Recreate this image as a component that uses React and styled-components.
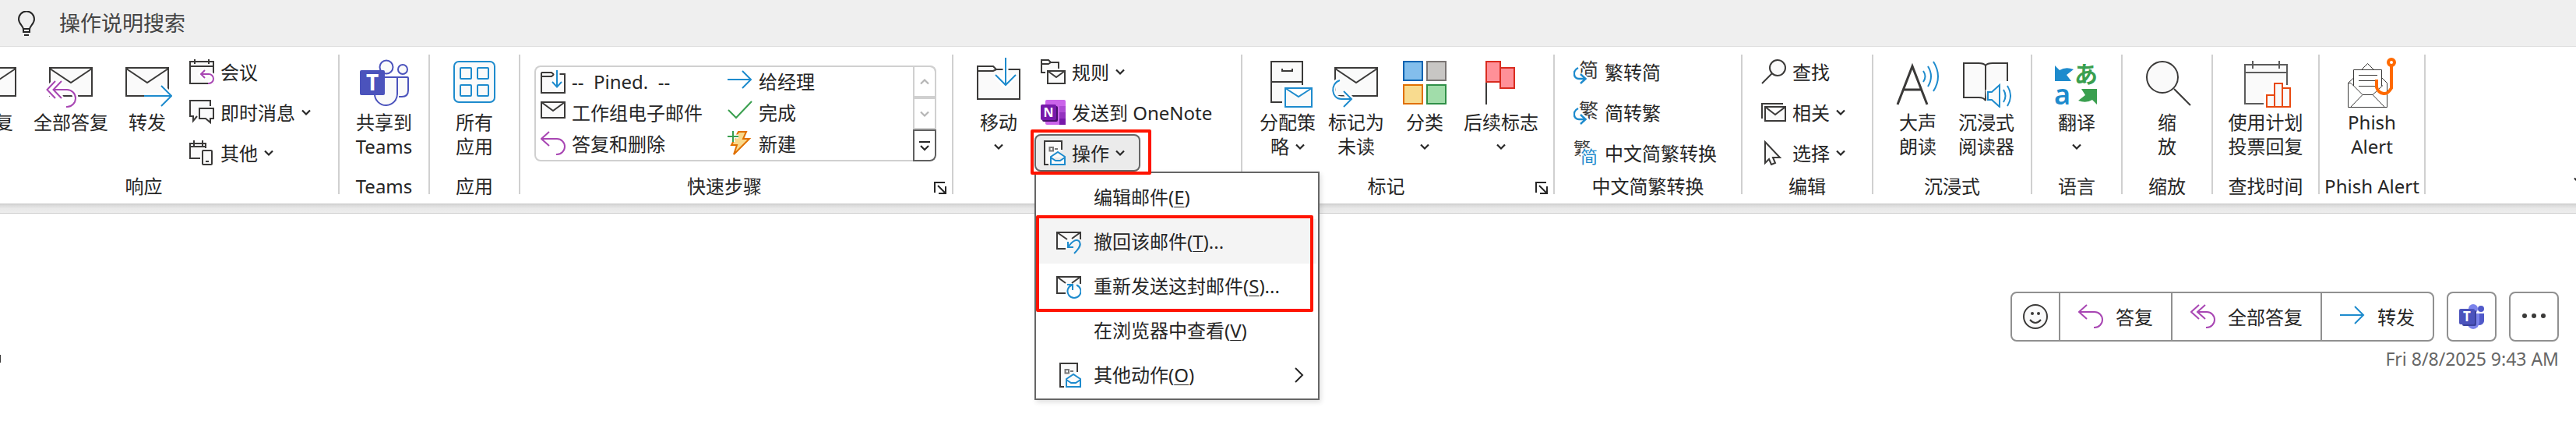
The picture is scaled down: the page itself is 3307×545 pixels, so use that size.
import React from "react";
import styled, { createGlobalStyle, css } from "styled-components";

const INK = "#3b3a39";
const BLUE = "#1e8bcd";
const PURPLE = "#a846b3";
const PAPER = "#fafafa";

const GlobalStyle = createGlobalStyle`
  * { box-sizing: border-box; }
  body {
    margin: 0;
    background: #fff;
    color: #262626;
    font-family: "Noto Sans", "Noto Sans CJK SC", sans-serif;
    font-size: 24px;
    line-height: 31px;
    overflow-x: hidden;
  }
  button, input { font: inherit; color: inherit; }
`;

/* ---------- layout ---------- */

const SearchBar = styled.label`
  display: flex;
  align-items: center;
  gap: 26px;
  height: 60px;
  padding: 0 18px;
  background: #efefef;
  border-bottom: 1px solid #dedede;
`;

const SearchInput = styled.input`
  width: 320px;
  padding: 0;
  border: 0;
  outline: 0;
  background: transparent;
  font-size: 27px;
  line-height: 40px;
  &::placeholder { color: #444; opacity: 1; }
`;

const Ribbon = styled.header`
  display: flex;
  align-items: stretch;
  justify-content: space-between;
  overflow-x: clip;
  background: #fff;
  border-bottom: 1px solid #c8c8c8;
`;

const Track = styled.div`
  display: flex;
  margin-left: -65px;
`;

const Group = styled.section`
  display: flex;
  flex: none;
  flex-direction: column;
  min-width: ${(p) => p.$min}px;
  padding: 8px 0 6px;
`;

const Divider = styled.div`
  flex: none;
  width: 2px;
  margin: 10px 0 12px;
  background: #d0d0d0;
`;

const Tools = styled.div`
  display: flex;
  align-items: flex-start;
  justify-content: ${(p) => (p.$center ? "center" : "flex-start")};
  height: 152px;
  padding-left: ${(p) => (p.$center ? 0 : 14)}px;
`;

const Footer = styled.footer`
  display: flex;
  align-items: center;
  height: 32px;
  margin-top: 3px;
`;

const GroupName = styled.h2`
  flex: 1;
  margin: 0;
  font-size: 24px;
  font-weight: 400;
  line-height: 32px;
  text-align: center;
  white-space: nowrap;
`;

const plainButton = css`
  border: 0;
  background: transparent;
  white-space: nowrap;
  cursor: pointer;
`;

const Launcher = styled.button`
  ${plainButton}
  display: flex;
  width: 30px;
  padding: 6px 6px 2px 6px;
`;

const LargeButton = styled.button`
  ${plainButton}
  display: flex;
  flex-direction: column;
  align-items: center;
  min-width: 88px;
  padding: 6px 6px 0;
  line-height: 31px;
`;

const LargeLabel = styled.span`
  display: flex;
  flex-direction: column;
  align-items: center;
  margin-top: 3px;
`;

const Line = styled.span`
  display: flex;
  align-items: center;
  gap: 8px;
  height: 31px;
`;

const Column = styled.div`
  display: flex;
  flex-direction: column;
  align-items: flex-start;
  gap: 4px;
  margin-left: 2px;
`;

const RowButton = styled.button`
  ${plainButton}
  display: flex;
  align-items: center;
  gap: 8px;
  height: 48px;
  padding: 0 20px 0 8px;
  ${(p) =>
    p.$open &&
    css`
      background: #ebebeb;
      border-radius: 8px;
      box-shadow: inset 0 0 0 2px #666;
    `}
`;

const Gallery = styled.div`
  display: flex;
  width: 516px;
  height: 123px;
  margin: 16px 4px 0;
  overflow: hidden;
  border-radius: 8px;
  box-shadow: inset 0 0 0 2px #d0d0d0;
`;

const GalleryItems = styled.div`
  display: grid;
  flex: 1;
  grid-template-columns: 240px 1fr;
  grid-auto-rows: 40px;
  padding-left: 8px;
`;

const GalleryItem = styled.button`
  ${plainButton}
  display: flex;
  align-items: center;
  gap: 8px;
  padding: 0;
  span { white-space: pre; }
`;

const Pager = styled.div`
  display: flex;
  flex-direction: column;
  width: 30px;
`;

const PagerButton = styled.button`
  ${plainButton}
  display: flex;
  flex: 1;
  align-items: center;
  justify-content: center;
  padding: 0;
  border: 2px solid ${(p) => (p.$active ? "#5f5f5f" : "#d0d0d0")};
  border-radius: ${(p) => (p.$active ? "0 0 8px 0" : p.$first ? "0 8px 0 0" : "0")};
`;

const CollapseButton = styled.button`
  ${plainButton}
  align-self: flex-end;
  display: flex;
  flex: none;
  margin: 0 -9px 24px 0;
  padding: 0;
`;

/* ---------- drop-down ---------- */

const MenuAnchor = styled.div`
  position: relative;
  z-index: 2;
`;

const Menu = styled.ul`
  position: absolute;
  top: 100%;
  left: 0;
  width: 366px;
  margin: 0;
  padding: 2px;
  list-style: none;
  background: #fff;
  border: 2px solid #666;
  box-shadow: 2px 3px 6px rgba(0, 0, 0, 0.12);
`;

const MenuItem = styled.button`
  ${plainButton}
  display: flex;
  align-items: center;
  gap: 16px;
  width: 100%;
  height: 57px;
  padding: 0 16px 0 24px;
  background: ${(p) => (p.$hover ? "#f4f4f4" : "transparent")};
  text-align: left;
  u { text-decoration-thickness: 1px; text-underline-offset: 3px; }
`;

const MenuIcon = styled.span`
  display: flex;
  width: 32px;
`;

const MenuText = styled.span`
  flex: 1;
`;

const Highlight = styled.div`
  position: absolute;
  border: 4px solid #ff1400;
  border-radius: 2px;
  pointer-events: none;
`;

const ButtonHighlight = styled(Highlight)`
  inset: -6px -14px -4px -5px;
`;

const ItemsHighlight = styled(Highlight)`
  top: 54px;
  left: 0;
  right: 6px;
  height: 124px;
`;

/* ---------- message pane ---------- */

const Shade = styled.div`
  height: 12px;
  background: linear-gradient(#d6d6d6, #e9e9e9 50%, #ededed);
  border-bottom: 1px solid #cfcfcf;
`;

const Message = styled.main`
  display: flex;
  flex-direction: column;
  align-items: flex-end;
  gap: 6px;
  padding: 100px 22px 60px 0;
`;

const Actions = styled.div`
  display: flex;
  gap: 16px;
`;

const Segments = styled.div`
  display: flex;
  height: 64px;
  border: 2px solid #909090;
  border-radius: 8px;
`;

const Segment = styled.button`
  ${plainButton}
  display: flex;
  align-items: center;
  gap: 16px;
  padding: 0 ${(p) => (p.$icon ? 14 : 23)}px;
  & + & { border-left: 2px solid #909090; }
`;

const Details = styled.div`
  display: flex;
  align-items: center;
  justify-content: space-between;
  width: 100%;
`;

const Edge = styled.span`
  width: 1px;
  height: 10px;
  background: ${INK};
`;

const Stamp = styled.time`
  color: #666;
  font-size: 23px;
  line-height: 32px;
`;

/* ---------- icons ---------- */

const Drawing = styled.svg`
  display: block;
  flex: none;
`;

const Svg = ({ s = 32, w = s, h = s, color = INK, children }) => (
  <Drawing width={w} height={h} viewBox={`0 0 ${w} ${h}`} fill="none" stroke={color} strokeWidth="2" aria-hidden="true">
    {children}
  </Drawing>
);

const Chevron = ({ color = "#262626" }) => (
  <Svg w={12} h={12} color={color}><path d="M1 3.5 6 8.5 11 3.5" strokeWidth="2.2" /></Svg>
);
const ChevronUp = () => <Svg w={12} h={12} color="#b5b5b5"><path d="M1 8.5 6 3.5 11 8.5" strokeWidth="2.2" /></Svg>;
const MoreIcon = () => <Svg w={14} h={14} color="#262626"><path d="M0 2H14M2 7 7 12 12 7" /></Svg>;
const LaunchIcon = () => <Svg s={18} color="#262626"><path d="M2 15V2H15M6 6 15 15M16 7V16H7" /></Svg>;

const Bulb = () => (
  <Svg color="#262626">
    <path d="M12 24C12 19 6 17 6 10.500A10 10 0 0 1 26 10.500C26 17 20 19 20 24V27H12ZM12 23H20M13 31H19" />
  </Svg>
);

const BigEnvelope = () => (
  <g><rect x="5" y="13" width="54" height="36" fill={PAPER} /><path d="M5 14 32 32 59 14" /></g>
);
const Halo = ({ d, color, width = 2 }) => (
  <g><path d={d} stroke="#fff" strokeWidth="7" /><path d={d} stroke={color} strokeWidth={width} /></g>
);

const ReplyBig = () => <Svg s={64}><BigEnvelope /></Svg>;
const ReplyAllBig = () => (
  <Svg s={64}><BigEnvelope /><Halo color={PURPLE} d="M12 30 1.500 41 12 52M20 30 9.500 41 20 52M10 41H27A11 11 0 0 1 27 63H26" /></Svg>
);
const ForwardBig = () => <Svg s={64}><BigEnvelope /><Halo color={BLUE} d="M28 49H62M50 36 63 49 50 62" /></Svg>;

const MeetingIcon = () => (
  <Svg>
    <rect x="1" y="3" width="30" height="28" fill={PAPER} /><path d="M1 9H31M7 0V6M25 0V6" />
    <Halo color={PURPLE} d="M20 14 15 19 20 24M16 19H25A6 6 0 0 1 25 31H24" />
  </Svg>
);
const ChatIcon = () => (
  <Svg>
    <path d="M27 8V1H1V21H5V27L10 21" fill={PAPER} /><path d="M13 11H31V24H27V29L21 24H13Z" fill={PAPER} />
  </Svg>
);
const DevicesIcon = () => (
  <Svg>
    <path d="M21 10V4H1V23H14" fill={PAPER} /><path d="M1 8H21M6 0V7M17 0V7" />
    <rect x="17" y="13" width="12" height="18" rx="1" fill={PAPER} /><path d="M21 27H25" />
  </Svg>
);

const TeamsBig = () => (
  <Svg s={64} color="#4b53bc">
    <circle cx="35" cy="12" r="8.500" fill={PAPER} /><circle cx="56" cy="15" r="6" fill={PAPER} />
    <path d="M50 25H62Q63 25 63 26V42Q63 50 55 50H51" fill={PAPER} />
    <path d="M33 25H49V46A14 14 0 0 1 20 47" fill={PAPER} />
    <rect x="1" y="16" width="32" height="32" rx="2" fill="#4b53bc" stroke="none" />
    <text x="17" y="42" textAnchor="middle" fontSize="28" fontWeight="700" fill="#fff" stroke="none">T</text>
  </Svg>
);
const AppsBig = () => (
  <Svg s={64} color={BLUE}>
    <rect x="6" y="5" width="52" height="52" rx="6" fill={PAPER} />
    {[14, 36].map((x) => [13, 35].map((y) => <rect key={`${x}-${y}`} x={x} y={y} width="14" height="14" rx="1" />))}
  </Svg>
);

const PinFolder = () => (
  <Svg><path d="M1 5H14L17 7.500 14 10H1M24 7H31V31H1V5" fill={PAPER} /><Halo color={BLUE} d="M21 2V23M15 17 21 23.500 27 17" /></Svg>
);
const MailIcon = () => <Svg><rect x="1" y="3" width="30" height="20" fill={PAPER} /><path d="M1 3 16 14 31 3" /></Svg>;
const ReplyIcon = () => <Svg color={PURPLE}><path d="M11 1 1 10 11 19M2 10H21A10 10 0 0 1 21 30H20" /></Svg>;
const ReplyAllIcon = () => <Svg color={PURPLE}><path d="M11 1 1 10 11 19M19 1 9 10 19 19M10 10H21A10 10 0 0 1 21 30H20" /></Svg>;
const ArrowIcon = () => <Svg color={BLUE}><path d="M0 14H29M19 3 30 14 19 25" /></Svg>;
const CheckIcon = () => <Svg color="#3a9f4f"><path d="M1 13 11 23 31 2" /></Svg>;
const BoltIcon = () => (
  <Svg>
    <path d="M14 1H24L20 10H28L8 30 12 18H5Z" fill="#f9d98c" stroke="#e07000" />
    <path d="M7 0V14M0 7H14" stroke="#fff" strokeWidth="5" /><path d="M7 0V14M0 7H14" stroke="#3a9f4f" />
  </Svg>
);

const MoveBig = () => (
  <Svg s={64}>
    <path d="M5 11H25L29 15H59V53H5Z" fill={PAPER} /><path d="M5 17H25L29 15" />
    <Halo color={BLUE} d="M41 0V34M28 22 41 35 54 22" />
  </Svg>
);
const RulesIcon = () => (
  <Svg>
    <path d="M6 17H1V1H10L13 4H23V12M1 6H10L13 4" fill={PAPER} />
    <rect x="9" y="15" width="22" height="16" fill={PAPER} /><path d="M9 15 20 23 31 15" />
  </Svg>
);
const OneNoteIcon = () => (
  <Svg>
    <g stroke="none">
      <rect x="6" y="0" width="26" height="32" rx="2" fill="#ca64ea" />
      <path d="M24 8H32V16H24Z" fill="#ae4bd5" /><path d="M24 16H32V24H24Z" fill="#9332bf" /><path d="M24 24H32V32H24Z" fill="#7719aa" />
      <rect x="2" y="8" width="20" height="20" rx="2" fill="#45106a" /><rect x="0" y="6" width="20" height="20" rx="2" fill="#7719aa" />
      <text x="10" y="22" textAnchor="middle" fontSize="16" fontWeight="700" fill="#fff">N</text>
    </g>
  </Svg>
);
const ActionsIcon = () => (
  <Svg>
    <path d="M10 31H5V1H27V12" fill={PAPER} /><path d="M11.500 9H16V13.500H11.500ZM18 11H22" stroke="#777" />
    <path d="M13 21 22 15 31 21V31H13ZM13 22 19 26H25L31 22" stroke={BLUE} fill={PAPER} />
  </Svg>
);
const RecallIcon = () => (
  <Svg>
    <path d="M12 25H1V4H31V13" fill={PAPER} /><path d="M1 4 14 13M31 4 20 12" />
    <path d="M15 16V23H22M15 23C20 16 25 12 29 15C33 19 30 24 23 31" stroke={BLUE} />
  </Svg>
);
const ResendIcon = () => (
  <Svg>
    <path d="M12 25H1V4H31V13" fill={PAPER} /><path d="M1 4 12 12M31 4 20 12" />
    <path d="M14 14H21V21M20 14.500A8.500 8.500 0 1 0 26 14.500" stroke={BLUE} />
  </Svg>
);
const NextIcon = () => <Svg w={12} h={20} color="#262626"><path d="M1 1 10 10 1 19" /></Svg>;

const CabinetBig = () => (
  <Svg s={64}>
    <rect x="11" y="5" width="40" height="52" fill={PAPER} /><path d="M11 31H51M25 14V17H38V14" />
    <path d="M27 37H64V64H27Z" fill="#fff" stroke="#fff" strokeWidth="4" />
    <path d="M29 39H63V63H29ZM29 39 46 50 63 39" fill={PAPER} stroke={BLUE} />
  </Svg>
);
const UnreadBig = () => (
  <Svg s={64}><BigEnvelope /><Halo color={BLUE} d="M11 29C-2 33 0 53 13 53H26M16 43 26 53 16 63" /></Svg>
);
const CategoryBig = () => (
  <Svg s={64}>
    <path d="M5 5H29V29H5Z" fill="#83beec" stroke="#0063b1" /><path d="M35 5H59V29H35Z" fill="#c8c6c4" stroke="#7a7574" />
    <path d="M5 35H29V59H5Z" fill="#f8db8f" stroke="#e07000" /><path d="M35 35H59V59H35Z" fill="#a1ddaa" stroke="#309048" />
  </Svg>
);
const FlagBig = () => (
  <Svg s={64}>
    <path d="M13 32V60" /><path d="M31 13H49V39H31Z" fill="#ff9098" stroke="#d92c20" /><path d="M13 5H31V31H13Z" fill="#ff9098" stroke="#d92c20" />
  </Svg>
);

const ConvertIcon = ({ glyph }) => (
  <Svg>
    <text x="7" y="23" fontSize="25" fill={INK} stroke="none">{glyph}</text>
    <Halo color={BLUE} width={2.5} d="M6 11C-2 15 0 25 7 25H15M9 19 15.500 25 9 31" />
  </Svg>
);
const ConvertBothIcon = () => (
  <Svg>
    <text x="0" y="18" fontSize="22" fill={INK} stroke="none">繁</text>
    <rect x="9" y="10" width="23" height="22" fill="#fff" stroke="none" />
    <text x="9" y="29" fontSize="22" fill={BLUE} stroke="none">简</text>
  </Svg>
);
const FindIcon = () => <Svg><circle cx="21" cy="11" r="10" fill={PAPER} /><path d="M14 18 1 31" /></Svg>;
const RelatedIcon = () => <Svg><path d="M1 24V5H28" /><path d="M5 9H31V27H5ZM5 9 18 19 31 9" fill={PAPER} /></Svg>;
const CursorIcon = () => <Svg><path d="M5 2V29L10 24 13 31 18 29 15 22H24Z" fill={PAPER} /></Svg>;

const ReadAloudBig = () => (
  <Svg s={64}>
    <path d="M6 60 25 11 44 60M13 41H37" strokeWidth="3" />
    <path d="M39 17Q44 24 39 31M45 11Q53 24 45 37M52 5Q64 24 52 43" stroke={BLUE} />
  </Svg>
);
const ReaderBig = () => (
  <Svg s={64}>
    <path d="M31 10Q29 7 22 7H3V51H22Q29 51 31 55V10Q33 7 40 7H59V51H32" fill={PAPER} />
    <path d="M31 41H36L49 30H64V64H33Z" fill="#fff" stroke="none" />
    <path d="M34 44H39L49 35V63L39 54H34Z" stroke={BLUE} fill={PAPER} /><path d="M54 41Q59 49 54 57M59 36Q67 49 59 62" stroke={BLUE} />
  </Svg>
);
const TranslateBig = () => (
  <Svg s={64}>
    <g stroke="none">
      <path d="M4 10 10 16Q18 11 28 15L19 22 25 30H4Z" fill={BLUE} />
      <path d="M38 40H58V60L52 54Q44 59 34 55L43 48Z" fill="#3a9f4f" />
      <text x="29" y="32" fontSize="30" fontWeight="700" fill="#3a9f4f">あ</text>
      <text x="3" y="60" fontSize="36" fontWeight="600" fill={BLUE}>a</text>
    </g>
  </Svg>
);
const ZoomBig = () => <Svg s={64}><circle cx="26" cy="25" r="20" fill={PAPER} /><path d="M41 40 62 61" /></Svg>;
const PollBig = () => (
  <Svg s={64} color="#5c5c5c">
    <path d="M5 9H59V59H5Z" fill={PAPER} /><path d="M5 19H59M15 4V14M49 4V14" />
    <path d="M29 44H39V29H57V35H64V64H29Z" fill="#fff" stroke="none" />
    <path d="M33 63V48H43V63ZM43 63V33H53V63ZM53 39H63V63H53" stroke="#e8490f" fill={PAPER} />
  </Svg>
);
const PhishBig = () => (
  <Svg s={64}>
    <g strokeWidth="1">
      <path d="M19 15 26.500 7.500 34 15M8.500 26 1.500 32.500V63.500H51.500V32.500L45 26M1.500 32.500H5L20 47.500H33L46 35.500M20 47.500 5 63M33 47.500 48 63" />
      <path d="M8.500 36V15.500H44.500V36" /><path d="M15 22.500H39M15 29.500H37M15 36.500H37" />
    </g>
    <circle cx="57" cy="6" r="4" stroke="#ff6a00" strokeWidth="4" />
    <path d="M57 10V39Q52 47 47 46Q40 45 38 38V28" stroke="#ff6a00" strokeWidth="4" />
  </Svg>
);

const SmileIcon = () => (
  <Svg>
    <circle cx="16" cy="16" r="15" fill={PAPER} /><path d="M9 20Q16 28 23 20" />
    <circle cx="12" cy="12" r="2" fill={INK} stroke="none" /><circle cx="20" cy="12" r="2" fill={INK} stroke="none" />
  </Svg>
);
const TeamsIcon = () => (
  <Svg>
    <g stroke="none">
      <circle cx="28" cy="6" r="4" fill="#5059c9" /><path d="M22 12H32V22Q31 27 25 27H22Z" fill="#5059c9" />
      <circle cx="18" cy="6" r="6" fill="#7b83eb" /><path d="M10 12H26V23A8 9 0 0 1 10 23Z" fill="#7b83eb" />
      <rect x="4" y="8" width="18" height="20" rx="2" fill="#3a429c" /><rect x="0" y="6" width="20" height="20" rx="2" fill="#4b53bc" />
      <text x="10" y="22" textAnchor="middle" fontSize="17" fontWeight="700" fill="#fff">T</text>
    </g>
  </Svg>
);
const DotsIcon = () => (
  <Svg color="none"><g fill={INK}><circle cx="4" cy="15" r="3" /><circle cx="16" cy="15" r="3" /><circle cx="28" cy="15" r="3" /></g></Svg>
);

/* ---------- composed parts ---------- */

const CHEVRON = "chevron";

const Large = ({ icon, lines }) => (
  <LargeButton type="button">
    {icon}
    <LargeLabel>
      {lines.map((line) => (
        <Line key={line}>
          {line.replace(CHEVRON, "")}
          {line.endsWith(CHEVRON) && <Chevron />}
        </Line>
      ))}
    </LargeLabel>
  </LargeButton>
);

const Row = ({ icon, label, drop, open }) => (
  <RowButton type="button" $open={open} aria-expanded={open}>
    {icon}
    <span>{label}</span>
    {drop && <Chevron />}
  </RowButton>
);

const RibbonGroup = ({ name, min, center, launcher, children }) => (
  <>
    <Group $min={min}>
      <Tools $center={center}>{children}</Tools>
      <Footer>
        {name && <GroupName>{name}</GroupName>}
        {launcher && <Launcher type="button" aria-label={name}><LaunchIcon /></Launcher>}
      </Footer>
    </Group>
    <Divider />
  </>
);

const quickSteps = [
  { icon: <PinFolder />, label: "--  Pined.  --" },
  { icon: <ArrowIcon />, label: "给经理" },
  { icon: <MailIcon />, label: "工作组电子邮件" },
  { icon: <CheckIcon />, label: "完成" },
  { icon: <ReplyIcon />, label: "答复和删除" },
  { icon: <BoltIcon />, label: "新建" },
];

const menuItems = [
  { label: "编辑邮件", accessKey: "E" },
  { label: "撤回该邮件", accessKey: "T", more: "...", icon: <RecallIcon />, hover: true },
  { label: "重新发送这封邮件", accessKey: "S", more: "...", icon: <ResendIcon /> },
  { label: "在浏览器中查看", accessKey: "V" },
  { label: "其他动作", accessKey: "O", icon: <ActionsIcon />, submenu: true },
];

export default function App() {
  return (
    <>
      <GlobalStyle />
      <SearchBar>
        <Bulb />
        <SearchInput type="text" placeholder="操作说明搜索" />
      </SearchBar>

      <Ribbon>
        <Track>
          <RibbonGroup name="响应" min={499}>
            <Large icon={<ReplyBig />} lines={["答复"]} />
            <Large icon={<ReplyAllBig />} lines={["全部答复"]} />
            <Large icon={<ForwardBig />} lines={["转发"]} />
            <Column>
              <Row icon={<MeetingIcon />} label="会议" />
              <Row icon={<ChatIcon />} label="即时消息" drop />
              <Row icon={<DevicesIcon />} label="其他" drop />
            </Column>
          </RibbonGroup>
          <RibbonGroup name="Teams" min={114} center>
            <Large icon={<TeamsBig />} lines={["共享到", "Teams"]} />
          </RibbonGroup>
          <RibbonGroup name="应用" min={114} center>
            <Large icon={<AppsBig />} lines={["所有", "应用"]} />
          </RibbonGroup>
          <RibbonGroup name="快速步骤" min={554} launcher>
            <Gallery>
              <GalleryItems>
                {quickSteps.map((step) => (
                  <GalleryItem type="button" key={step.label}>
                    {step.icon}
                    <span>{step.label}</span>
                  </GalleryItem>
                ))}
              </GalleryItems>
              <Pager>
                <PagerButton type="button" $first aria-label="向上"><ChevronUp /></PagerButton>
                <PagerButton type="button" aria-label="向下"><Chevron color="#b5b5b5" /></PagerButton>
                <PagerButton type="button" $active aria-label="更多"><MoreIcon /></PagerButton>
              </Pager>
            </Gallery>
          </RibbonGroup>
          <RibbonGroup min={369}>
            <Large icon={<MoveBig />} lines={["移动", CHEVRON]} />
            <Column>
              <Row icon={<RulesIcon />} label="规则" drop />
              <Row icon={<OneNoteIcon />} label="发送到 OneNote" />
              <MenuAnchor>
                <Row icon={<ActionsIcon />} label="操作" drop open />
                <Menu>
                  {menuItems.map((item) => (
                    <li key={item.label}>
                      <MenuItem type="button" $hover={item.hover}>
                        <MenuIcon>{item.icon}</MenuIcon>
                        <MenuText>
                          {item.label}(<u>{item.accessKey}</u>){item.more}
                        </MenuText>
                        {item.submenu && <NextIcon />}
                      </MenuItem>
                    </li>
                  ))}
                  <ItemsHighlight as="li" />
                </Menu>
                <ButtonHighlight />
              </MenuAnchor>
            </Column>
          </RibbonGroup>
          <RibbonGroup name="标记" min={399} launcher>
            <Large icon={<CabinetBig />} lines={["分配策", "略" + CHEVRON]} />
            <Large icon={<UnreadBig />} lines={["标记为", "未读"]} />
            <Large icon={<CategoryBig />} lines={["分类", CHEVRON]} />
            <Large icon={<FlagBig />} lines={["后续标志", CHEVRON]} />
          </RibbonGroup>
          <RibbonGroup name="中文简繁转换" min={239}>
            <Column>
              <Row icon={<ConvertIcon glyph="简" />} label="繁转简" />
              <Row icon={<ConvertIcon glyph="繁" />} label="简转繁" />
              <Row icon={<ConvertBothIcon />} label="中文简繁转换" />
            </Column>
          </RibbonGroup>
          <RibbonGroup name="编辑" min={166}>
            <Column>
              <Row icon={<FindIcon />} label="查找" />
              <Row icon={<RelatedIcon />} label="相关" drop />
              <Row icon={<CursorIcon />} label="选择" drop />
            </Column>
          </RibbonGroup>
          <RibbonGroup name="沉浸式" min={202} center>
            <Large icon={<ReadAloudBig />} lines={["大声", "朗读"]} />
            <Large icon={<ReaderBig />} lines={["沉浸式", "阅读器"]} />
          </RibbonGroup>
          <RibbonGroup name="语言" min={114} center>
            <Large icon={<TranslateBig />} lines={["翻译", CHEVRON]} />
          </RibbonGroup>
          <RibbonGroup name="缩放" min={114} center>
            <Large icon={<ZoomBig />} lines={["缩", "放"]} />
          </RibbonGroup>
          <RibbonGroup name="查找时间" min={135} center>
            <Large icon={<PollBig />} lines={["使用计划", "投票回复"]} />
          </RibbonGroup>
          <RibbonGroup name="Phish Alert" min={134} center>
            <Large icon={<PhishBig />} lines={["Phish", "Alert"]} />
          </RibbonGroup>
        </Track>
        <CollapseButton type="button" aria-label="折叠功能区"><Chevron /></CollapseButton>
      </Ribbon>
      <Shade />

      <Message>
        <Actions>
          <Segments>
            <Segment type="button" $icon aria-label="回应"><SmileIcon /></Segment>
            <Segment type="button"><ReplyIcon />答复</Segment>
            <Segment type="button"><ReplyAllIcon />全部答复</Segment>
            <Segment type="button"><ArrowIcon />转发</Segment>
          </Segments>
          <Segments>
            <Segment type="button" $icon aria-label="Teams"><TeamsIcon /></Segment>
          </Segments>
          <Segments>
            <Segment type="button" $icon aria-label="更多"><DotsIcon /></Segment>
          </Segments>
        </Actions>
        <Details>
          <Edge />
          <Stamp dateTime="2025-08-08T09:43">Fri 8/8/2025 9:43 AM</Stamp>
        </Details>
      </Message>
    </>
  );
}
